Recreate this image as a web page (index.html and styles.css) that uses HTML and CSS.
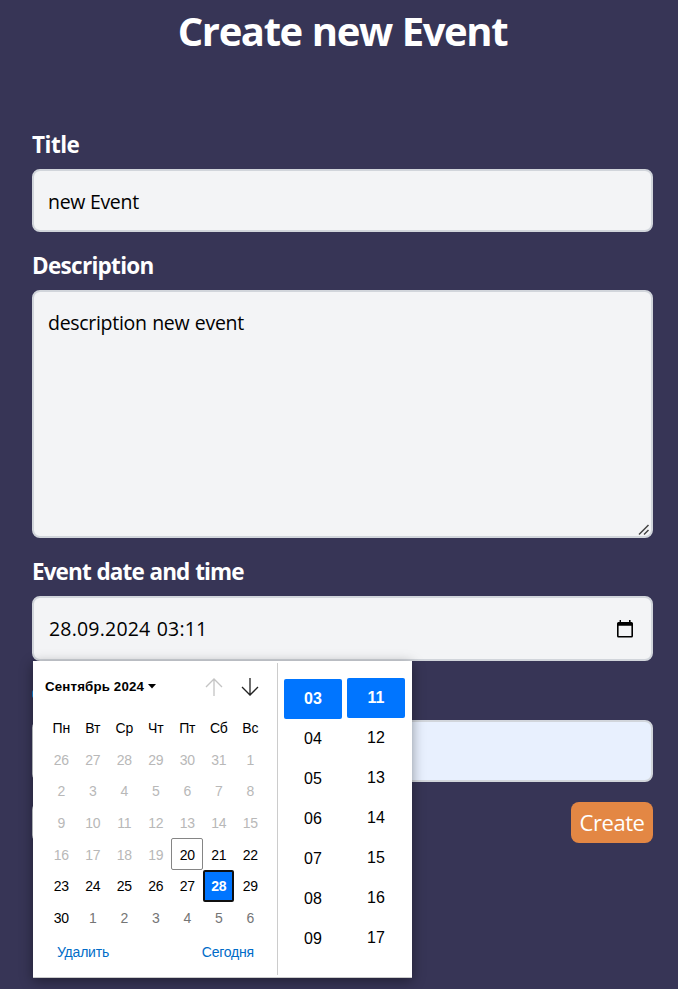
FILE: index.html
```html
<!DOCTYPE html>
<html lang="en">
<head>
<meta charset="utf-8">
<title>Create new Event</title>
<link rel="stylesheet" href="styles.css">
</head>
<body>
<main class="page">
  <h1 class="heading"><span>Create new Event</span></h1>
  <form class="form">
    <div class="label label-title">Title</div>
    <div class="field field-title"><span class="v-title">new Event</span></div>
    <div class="label label-desc">Description</div>
    <div class="field field-desc"><span class="v-desc">description new event</span>
      <svg class="grip" width="12" height="12" viewBox="0 0 12 12"><path d="M1 10.5 10.5 1M6 10.5 10.5 6" stroke="#444" stroke-width="1.5" fill="none"/></svg>
    </div>
    <div class="label label-date">Event date and time</div>
    <div class="field field-date"><span class="v-date">28.09.2024 03:11</span>
      <svg class="cal-icon" width="16" height="18" viewBox="0 0 16 18"><path fill="#000" fill-rule="evenodd" d="M2.6 0H4v2h8V0h1.6v2h.9Q16 2 16 3.500v12.500Q16 17.500 14.500 17.500h-13Q0 17.500 0 16V3.500Q0 2 1.500 2h1.100zM1.600 5.800v10.100h12.800V5.800z"/></svg>
      <div class="popup">
        <section class="month">
          <header class="month-head">
            <span class="month-name">Сентябрь 2024</span>
            <svg class="caret" width="8" height="5" viewBox="0 0 8 5"><path d="M0 0h8L4 4.500z"/></svg>
            <svg class="arrow up" width="18" height="18" viewBox="0 0 18 18"><path d="M9 18V1M1 9l8-8 8 8" fill="none" stroke="#c4c4c4" stroke-width="1.300"/></svg>
            <svg class="arrow" width="18" height="18" viewBox="0 0 18 18"><path d="M9 0v17M1 9l8 8 8-8" fill="none" stroke="#222" stroke-width="1.300"/></svg>
          </header>
          <div class="days">
            <b>Пн</b><b>Вт</b><b>Ср</b><b>Чт</b><b>Пт</b><b>Сб</b><b>Вс</b>
            <i>26</i><i>27</i><i>28</i><i>29</i><i>30</i><i>31</i><i>1</i>
            <i>2</i><i>3</i><i>4</i><i>5</i><i>6</i><i>7</i><i>8</i>
            <i>9</i><i>10</i><i>11</i><i>12</i><i>13</i><i>14</i><i>15</i>
            <i>16</i><i>17</i><i>18</i><i>19</i><b class="today">20</b><b>21</b><b>22</b>
            <b>23</b><b>24</b><b>25</b><b>26</b><b>27</b><b class="selected">28</b><b>29</b>
            <b>30</b><i class="next">1</i><i class="next">2</i><i class="next">3</i><i class="next">4</i><i class="next">5</i><i class="next">6</i>
          </div>
          <footer class="month-foot"><span>Удалить</span><span>Сегодня</span></footer>
        </section>
        <section class="time">
          <div class="col hours"><span class="on">03</span><span>04</span><span>05</span><span>06</span><span>07</span><span>08</span><span>09</span></div>
          <div class="col minutes"><span class="on">11</span><span>12</span><span>13</span><span>14</span><span>15</span><span>16</span><span>17</span></div>
        </section>
      </div>
    </div>
    <div class="hint"></div>
    <div class="field field-tags"></div>
    <div class="actions"><div class="cancel"></div><div class="create"><span>Create</span></div></div>
  </form>
</main>
</body>
</html>
```
FILE: styles.css
```css
* { box-sizing: border-box; }
body {
  margin: 0;
  height: 989px;
  overflow: hidden;
  background: #373556;
  font-family: "Open Sans", "Noto Sans", sans-serif;
  color: #000;
}
.page { padding: 0 25px 0 32px; }
.heading {
  margin: 0;
  height: 125px;
  padding-top: 3px;
  font-size: 40px;
  line-height: 56px;
  font-weight: 700;
  letter-spacing: -1.4px;
  word-spacing: 1px;
  text-align: center;
  color: #fff;
}
.form { display: flex; flex-direction: column; }
.label {
  font-size: 22.5px;
  font-weight: 700;
  line-height: 40px;
  height: 44px;
  color: #fff;
  letter-spacing: -0.7px;
  white-space: nowrap;
}
.label-title { letter-spacing: -0.5px; }
.label-desc { margin-top: 14px; }
.label-date { margin-top: 14px; letter-spacing: -0.9px; word-spacing: 0.8px; }
.field {
  position: relative;
  border: 2px solid #d1d5db;
  border-radius: 8px;
  background: #f3f4f6;
  padding: 0 14px;
  font-size: 19.5px;
  line-height: 62px;
  white-space: nowrap;
}
.field-title { height: 63px; letter-spacing: -0.3px; }
.field-desc { height: 248px; letter-spacing: -0.3px; word-spacing: 0.8px; }
.field-date { height: 65px; display: flex; align-items: center; justify-content: space-between; padding: 0 18px 0 15px; line-height: 64px; letter-spacing: 0.2px; word-spacing: 1px; }
.v-date { padding-top: 1px; }
.grip { position: absolute; right: 1px; bottom: 0; }
.popup {
  position: absolute;
  z-index: 2;
  left: -1px;
  top: 63px;
  width: 379px;
  height: 317px;
  display: flex;
  background: #fff;
  border-bottom: 1px solid #ccc;
  box-shadow: 0 3px 12px rgba(0, 0, 0, .4);
  font-family: "Liberation Sans", sans-serif;
  letter-spacing: 0;
  word-spacing: 0;
}
.month {
  width: 245px;
  margin: 2px 0;
  padding: 11px 11px 0 12px;
  border-right: 1px solid #ccc;
  font-size: 14px;
  letter-spacing: -0.2px;
  line-height: normal;
}
.month-head { display: flex; align-items: center; height: 24px; }
.month-name { font-size: 13.3px; font-weight: 700; letter-spacing: 0.15px; }
.caret { margin-left: 4px; }
.arrow { margin-left: 18px; }
.up { margin-left: auto; margin-top: 2px; }
.month-head .arrow:last-child { margin-top: 2px; margin-right: 7px; }
.days {
  display: grid;
  grid-template-columns: repeat(7, 31.5px);
  grid-auto-rows: 31.6px;
  margin-top: 14px;
}
.days b, .days i {
  display: flex;
  align-items: center;
  justify-content: center;
  padding: 1px 0 0 1px;
  font-style: normal;
  font-weight: 400;
}
.days i { color: #b8b8b8; }
.days .next { color: #757575; }
.days .today { border: 1px solid #858585; border-radius: 2px; }
.days .selected { border: 2px solid #101010; border-radius: 2px; background: #0075ff; color: #fff; font-weight: 700; }
.month-foot {
  display: flex;
  justify-content: space-between;
  padding: 11px 12px 0;
  color: #006cc8;
}
.time { display: flex; gap: 5px; padding-left: 6px; }
.col { width: 58px; padding-top: 18px; }
.minutes { padding-top: 17px; }
.col span { display: block; height: 40px; font-size: 16px; line-height: 39px; text-align: center; }
.col .on { background: #0075ff; color: #fff; font-weight: 700; border-radius: 2px; }
.hint { width: 2px; height: 8px; margin-top: 29px; border-radius: 4px 0 0 4px; background: #1684d8; }
.field-tags { height: 62px; margin-top: 22px; background: #e8f0fe; }
.actions { display: flex; justify-content: space-between; margin-top: 20px; }
.cancel { width: 80px; height: 41px; border-radius: 8px; background: #d1d5db; }
.create {
  width: 82px;
  height: 41px;
  border-radius: 8px;
  background: #e38744;
  color: #fff;
  font-size: 22px;
  line-height: 41px;
  text-align: center;
  letter-spacing: -0.45px;
}
```
